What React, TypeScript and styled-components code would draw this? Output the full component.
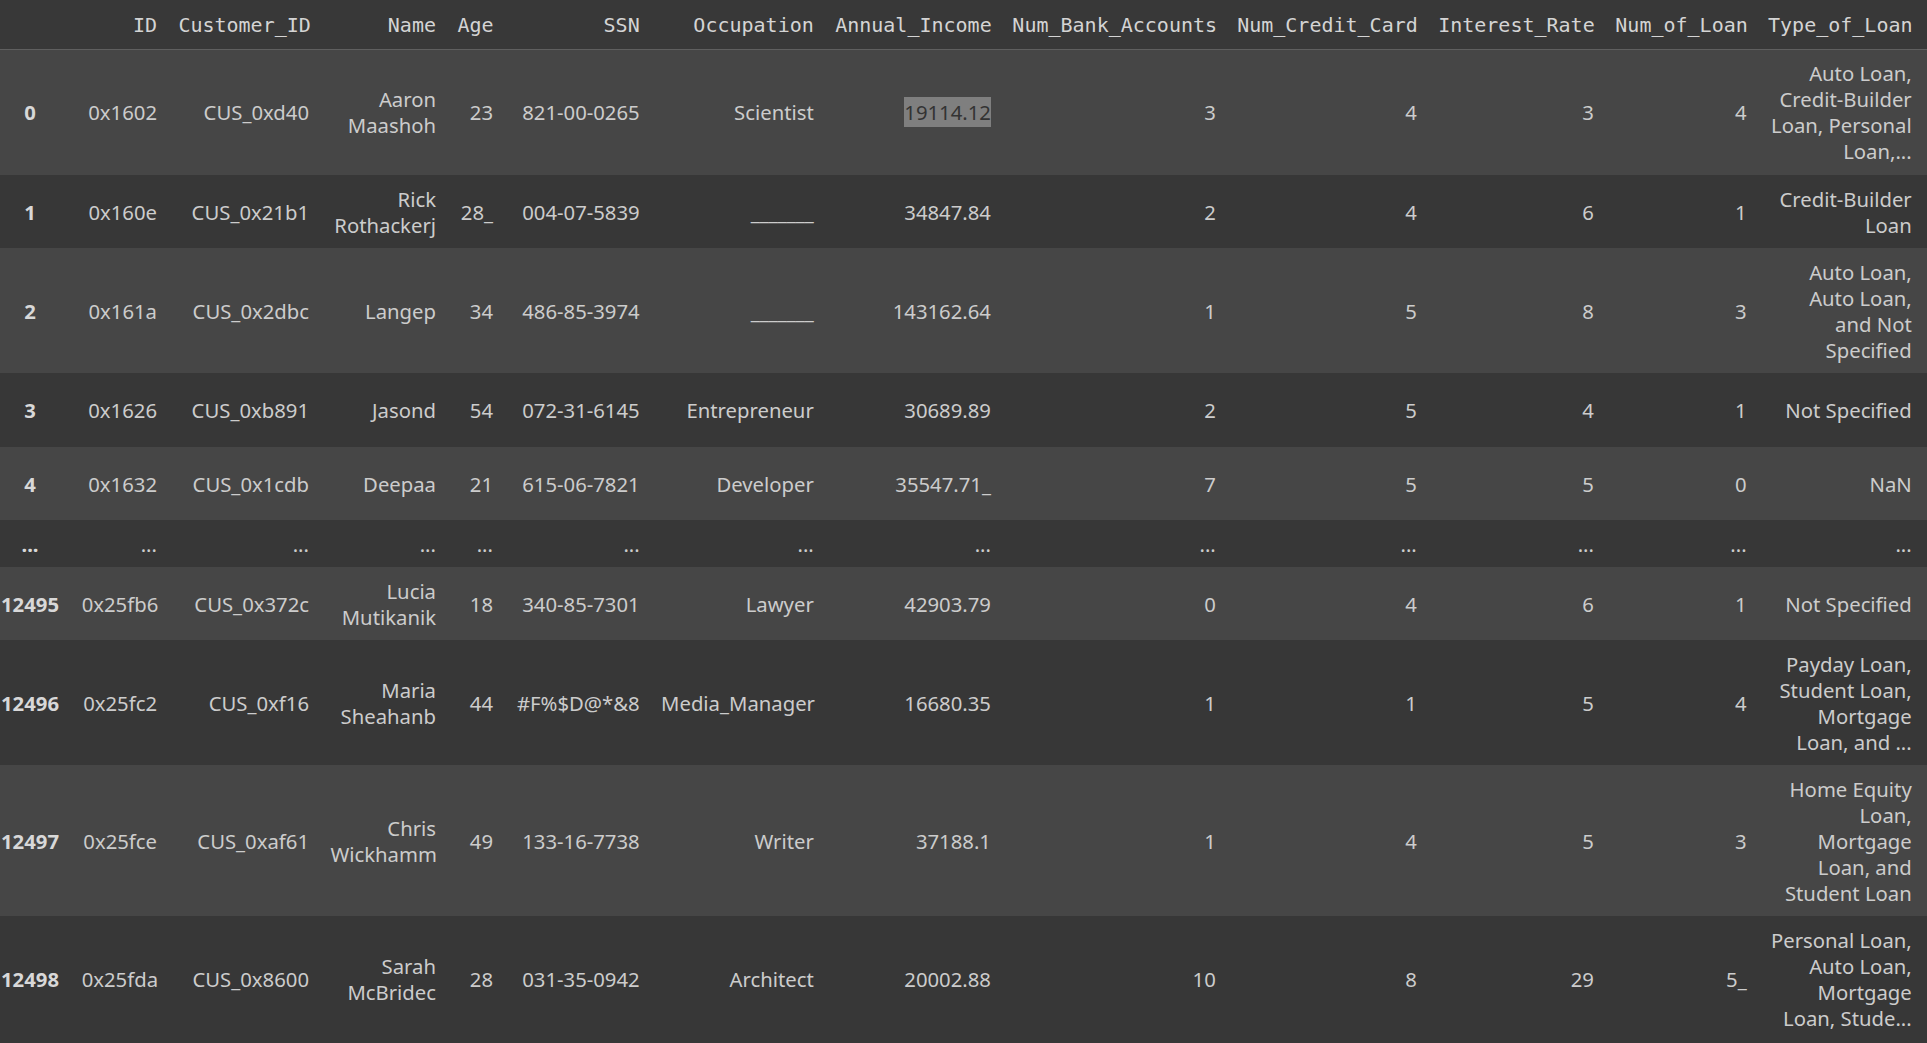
import React from "react";
import styled, { createGlobalStyle } from "styled-components";

const GlobalStyle = createGlobalStyle`
  html, body {
    margin: 0;
    padding: 0;
    background: #373737;
    overflow: hidden;
  }
  #root {
    width: 1927px;
    height: 1043px;
    overflow: hidden;
  }
`;

const Frame = styled.div`
  width: 1927px;
  height: 1043px;
  overflow: hidden;
  background: #373737;
`;

const Table = styled.table`
  margin-left: -11px;
  width: 1973.5px;
  table-layout: fixed;
  border-collapse: collapse;
  border-spacing: 0;
  color: #cccccc;
  font-family: "Noto Sans", "Open Sans", sans-serif;
  font-size: 20.3px;
  line-height: 26px;
`;

const HeadRow = styled.tr`
  background: #383838;
  border-bottom: 1px solid #5f5f5f;
`;

const HeadCell = styled.th<{ $w: number }>`
  box-sizing: border-box;
  width: ${(p) => p.$w}px;
  height: 49px;
  padding: 1px 10.7px 0;
  text-align: right;
  vertical-align: middle;
  font-family: "DejaVu Sans Mono", "Liberation Mono", monospace;
  font-size: 20px;
  font-weight: normal;
  white-space: nowrap;
  color: #d4d4d4;
`;

const BodyRow = styled.tr<{ $odd: boolean; $h: number }>`
  background: ${(p) => (p.$odd ? "#373737" : "#464646")};
  height: ${(p) => p.$h}px;
`;

const IndexCell = styled.th`
  box-sizing: border-box;
  padding: 10.5px 10.7px;
  text-align: center;
  vertical-align: middle;
  font-weight: bold;
  white-space: nowrap;
  color: #d8d8d8;
`;

const Cell = styled.td`
  box-sizing: border-box;
  padding: 10.5px 10.7px;
  text-align: right;
  vertical-align: middle;
  white-space: nowrap;
`;

const Highlight = styled.span`
  background: #7f7f7f;
  color: #333333;
  padding: 1px 0;
`;

type Value = string | string[] | { hl: string };

const columns: { name: string; w: number }[] = [
  { name: "", w: 82 },
  { name: "ID", w: 96.7 },
  { name: "Customer_ID", w: 152 },
  { name: "Name", w: 127 },
  { name: "Age", w: 57 },
  { name: "SSN", w: 146.7 },
  { name: "Occupation", w: 174.1 },
  { name: "Annual_Income", w: 177.2 },
  { name: "Num_Bank_Accounts", w: 224.8 },
  { name: "Num_Credit_Card", w: 201 },
  { name: "Interest_Rate", w: 177.2 },
  { name: "Num_of_Loan", w: 152.7 },
  { name: "Type_of_Loan", w: 165.1 },
  { name: "", w: 40 },
];

const U = "_______";

const rows: { idx: string; h: number; values: Value[] }[] = [
  {
    idx: "0",
    h: 126,
    values: [
      "0x1602", "CUS_0xd40", ["Aaron", "Maashoh"], "23", "821-00-0265", "Scientist",
      { hl: "19114.12" }, "3", "4", "3", "4",
      ["Auto Loan,", "Credit-Builder", "Loan, Personal", "Loan,..."],
    ],
  },
  {
    idx: "1",
    h: 73,
    values: [
      "0x160e", "CUS_0x21b1", ["Rick", "Rothackerj"], "28_", "004-07-5839", U,
      "34847.84", "2", "4", "6", "1", ["Credit-Builder", "Loan"],
    ],
  },
  {
    idx: "2",
    h: 124,
    values: [
      "0x161a", "CUS_0x2dbc", "Langep", "34", "486-85-3974", U,
      "143162.64", "1", "5", "8", "3", ["Auto Loan,", "Auto Loan,", "and Not", "Specified"],
    ],
  },
  {
    idx: "3",
    h: 74,
    values: [
      "0x1626", "CUS_0xb891", "Jasond", "54", "072-31-6145", "Entrepreneur",
      "30689.89", "2", "5", "4", "1", "Not Specified",
    ],
  },
  {
    idx: "4",
    h: 73,
    values: [
      "0x1632", "CUS_0x1cdb", "Deepaa", "21", "615-06-7821", "Developer",
      "35547.71_", "7", "5", "5", "0", "NaN",
    ],
  },
  {
    idx: "...",
    h: 47,
    values: Array(12).fill("..."),
  },
  {
    idx: "12495",
    h: 73,
    values: [
      "0x25fb6", "CUS_0x372c", ["Lucia", "Mutikanik"], "18", "340-85-7301", "Lawyer",
      "42903.79", "0", "4", "6", "1", "Not Specified",
    ],
  },
  {
    idx: "12496",
    h: 125,
    values: [
      "0x25fc2", "CUS_0xf16", ["Maria", "Sheahanb"], "44", "#F%$D@*&8", "Media_Manager",
      "16680.35", "1", "1", "5", "4",
      ["Payday Loan,", "Student Loan,", "Mortgage", "Loan, and ..."],
    ],
  },
  {
    idx: "12497",
    h: 151,
    values: [
      "0x25fce", "CUS_0xaf61", ["Chris", "Wickhamm"], "49", "133-16-7738", "Writer",
      "37188.1", "1", "4", "5", "3",
      ["Home Equity", "Loan,", "Mortgage", "Loan, and", "Student Loan"],
    ],
  },
  {
    idx: "12498",
    h: 125,
    values: [
      "0x25fda", "CUS_0x8600", ["Sarah", "McBridec"], "28", "031-35-0942", "Architect",
      "20002.88", "10", "8", "29", "5_",
      ["Personal Loan,", "Auto Loan,", "Mortgage", "Loan, Stude..."],
    ],
  },
];

function renderValue(v: Value) {
  if (Array.isArray(v)) {
    return v.map((line, i) => (
      <React.Fragment key={i}>
        {i > 0 && <br />}
        {line}
      </React.Fragment>
    ));
  }
  if (typeof v === "object") {
    return <Highlight>{v.hl}</Highlight>;
  }
  return v;
}

export default function App() {
  return (
    <Frame>
      <GlobalStyle />
      <Table>
        <thead>
          <HeadRow>
            {columns.map((c, i) => (
              <HeadCell key={i} $w={c.w}>
                {c.name}
              </HeadCell>
            ))}
          </HeadRow>
        </thead>
        <tbody>
          {rows.map((r, ri) => (
            <BodyRow key={ri} $odd={ri % 2 === 1} $h={r.h}>
              <IndexCell>{r.idx}</IndexCell>
              {r.values.map((v, vi) => (
                <Cell key={vi}>{renderValue(v)}</Cell>
              ))}
              <Cell />
            </BodyRow>
          ))}
        </tbody>
      </Table>
    </Frame>
  );
}
